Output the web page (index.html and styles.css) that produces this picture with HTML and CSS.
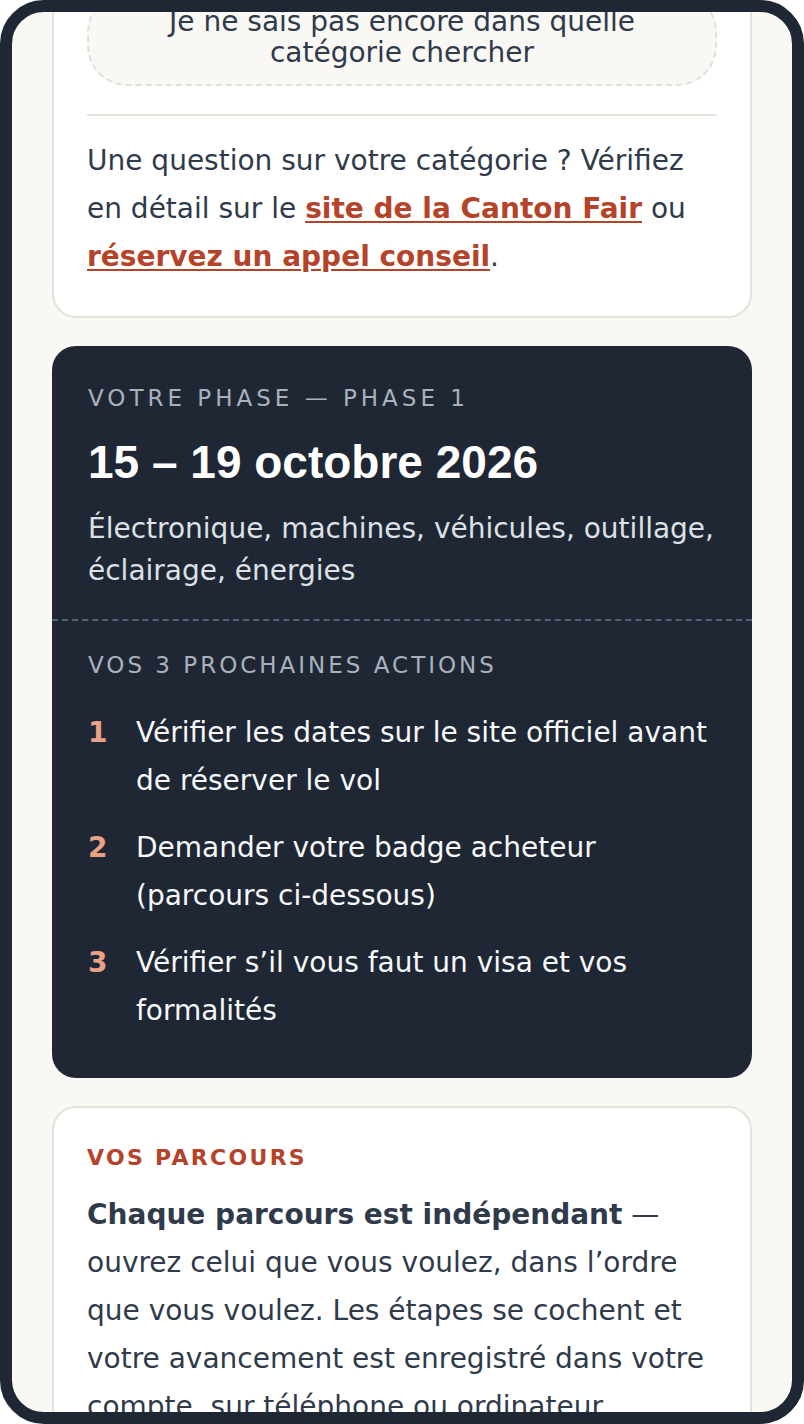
FILE: index.html
```html
<!DOCTYPE html>
<html lang="fr">
<head>
    <meta charset="UTF-8">
    <meta name="viewport" content="width=device-width, initial-scale=1.0">
    <title>Mon parcours Canton Fair</title>
    <link rel="stylesheet" href="styles.css">
</head>
<body>
    <div class="phone">
        <main class="screen">

            <section class="card category-card">
                <button type="button" class="unsure-btn">Je ne sais pas encore dans quelle catégorie chercher</button>
                <hr class="divider">
                <p class="help-text">
                    Une question sur votre catégorie ? Vérifiez en détail sur le
                    <a href="#">site de la Canton Fair</a> ou
                    <a href="#">réservez un appel conseil</a>.
                </p>
            </section>

            <section class="phase-card">
                <div class="phase-top">
                    <p class="phase-label wide">Votre phase — Phase 1</p>
                    <h2 class="phase-dates">15 – 19 octobre 2026</h2>
                    <p class="phase-sectors">Électronique, machines, véhicules, outillage, éclairage, énergies</p>
                </div>
                <div class="phase-actions">
                    <p class="phase-label">Vos 3 prochaines actions</p>
                    <ol class="action-list">
                        <li><span class="num">1</span><span>Vérifier les dates sur le site officiel avant de réserver le vol</span></li>
                        <li><span class="num">2</span><span>Demander votre badge acheteur (parcours ci-dessous)</span></li>
                        <li><span class="num">3</span><span>Vérifier s’il vous faut un visa et vos formalités</span></li>
                    </ol>
                </div>
            </section>

            <section class="card parcours-card">
                <p class="eyebrow">Vos parcours</p>
                <p class="help-text">
                    <strong>Chaque parcours est indépendant</strong> — ouvrez celui que vous voulez, dans l’ordre que vous voulez. Les étapes se cochent et votre avancement est enregistré dans votre compte, sur téléphone ou ordinateur.
                </p>
            </section>

        </main>
    </div>
</body>
</html>
```

FILE: styles.css
```css
body {
    margin: 0;
    background: #fff;
    font-family: "DejaVu Sans", Verdana, sans-serif;
    color: #2f3a4a;
}
.phone {
    height: 1424px;
    box-sizing: border-box;
    border: 12px solid #1e2733;
    border-radius: 44px;
    background: #f9f8f5;
    overflow: hidden;
}
.screen {
    display: flex;
    flex-direction: column;
    gap: 28px;
    padding: 0 40px;
    margin-top: -56px;
}

/* white cards */
.card {
    background: #fff;
    border: 2px solid #e6e2d9;
    border-radius: 24px;
    padding: 34px 33px 35px;
}
.parcours-card {
    padding-top: 35px;
}
.unsure-btn {
    display: block;
    width: 100%;
    padding: 12px 24px 16px;
    background: #f9f8f5;
    border: 2px dashed #e3dfd6;
    border-radius: 40px;
    font-family: inherit;
    font-size: 28px;
    line-height: 31px;
    color: #2f3a4a;
    text-align: center;
}
.divider {
    border: none;
    border-top: 2px solid #e6e1d9;
    margin: 28px 0 21px;
}
.help-text {
    margin: 0;
    font-size: 28px;
    line-height: 48px;
}
.help-text a {
    color: #b5432a;
    font-weight: bold;
    text-decoration: underline;
    text-underline-offset: 3px;
}
.help-text strong {
    color: #2f3a4a;
}
.eyebrow {
    margin: 0 0 18px;
    font-size: 22px;
    line-height: 30px;
    font-weight: bold;
    letter-spacing: 2.3px;
    text-transform: uppercase;
    color: #b5432a;
}

/* dark phase card */
.phase-card {
    background: #1f2734;
    border-radius: 24px;
    color: #fff;
}
.phase-top {
    padding: 37px 36px 27px;
}
.phase-label {
    margin: 0;
    font-size: 23px;
    line-height: 30px;
    letter-spacing: 3px;
    text-transform: uppercase;
    color: #a9b1bc;
}
.phase-label.wide {
    letter-spacing: 4px;
}
.phase-dates {
    margin: 22px 0 18px;
    font-family: "Liberation Sans", Arial, sans-serif;
    font-size: 46px;
    line-height: 55px;
    font-weight: bold;
}
.phase-sectors {
    margin: 0;
    font-size: 28px;
    line-height: 42px;
    color: #dde1e6;
}
.phase-actions {
    border-top: 2px dashed #566070;
    padding: 29px 36px 43px;
}
.action-list {
    list-style: none;
    margin: 29px 0 0;
    padding: 0;
    display: flex;
    flex-direction: column;
    gap: 19px;
}
.action-list li {
    display: flex;
    gap: 28px;
    font-size: 28px;
    line-height: 48px;
    color: #f7f8fa;
}
.action-list .num {
    flex: 0 0 20px;
    font-weight: bold;
    color: #eaa287;
}
```
